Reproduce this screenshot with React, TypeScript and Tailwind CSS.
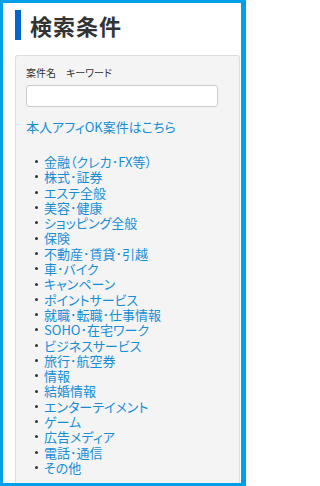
import React from "react";

const items = [
  "金融（クレカ･FX等）",
  "株式･証券",
  "エステ全般",
  "美容･健康",
  "ショッピング全般",
  "保険",
  "不動産･賃貸･引越",
  "車･バイク",
  "キャンペーン",
  "ポイントサービス",
  "就職･転職･仕事情報",
  "SOHO･在宅ワーク",
  "ビジネスサービス",
  "旅行･航空券",
  "情報",
  "結婚情報",
  "エンターテイメント",
  "ゲーム",
  "広告メディア",
  "電話･通信",
  "その他",
];

export default function App() {
  return (
    <div className="w-[246px] h-[486px] box-border border-solid border-[#00a0e9] border-t-[3px] border-l-[3px] border-b-[3px] border-r-[5px] bg-white overflow-hidden flex flex-col font-['Noto_Sans_CJK_JP',sans-serif] [font-feature-settings:'palt']">
      <div className="flex items-center pl-[12px] pt-[7px]">
        <div className="w-[6px] h-[30px] bg-[#0066cc]" />
        <h1 className="ml-[9px] text-[22px] leading-[30px] font-bold text-[#333] tracking-[1px]">
          検索条件
        </h1>
      </div>
      <div className="ml-[12px] mr-[1px] mt-[15px] flex-1 bg-[#f4f4f4] border border-b-0 border-[#dddddd] rounded-t-[3px] pl-[10px] pt-[11px]">
        <div className="text-[10px] leading-[12px] text-[#333]">案件名　キーワード</div>
        <div className="mt-[6px] w-[192px] h-[22px] bg-white border border-[#cccccc] rounded-[3px]" />
        <a className="block mt-[12px] text-[13px] leading-[16px] text-[#168ed6]">本人アフィOK案件はこちら</a>
        <ul className="mt-[19px] pl-[9px]">
          {items.map((t) => (
            <li key={t} className="flex items-center h-[15.3px] text-[13px] leading-[15.3px] text-[#168ed6] whitespace-nowrap">
              <span className="w-[3px] h-[3px] bg-[#333] rounded-full mr-[6px] shrink-0" />
              <span>{t}</span>
            </li>
          ))}
        </ul>
      </div>
    </div>
  );
}
